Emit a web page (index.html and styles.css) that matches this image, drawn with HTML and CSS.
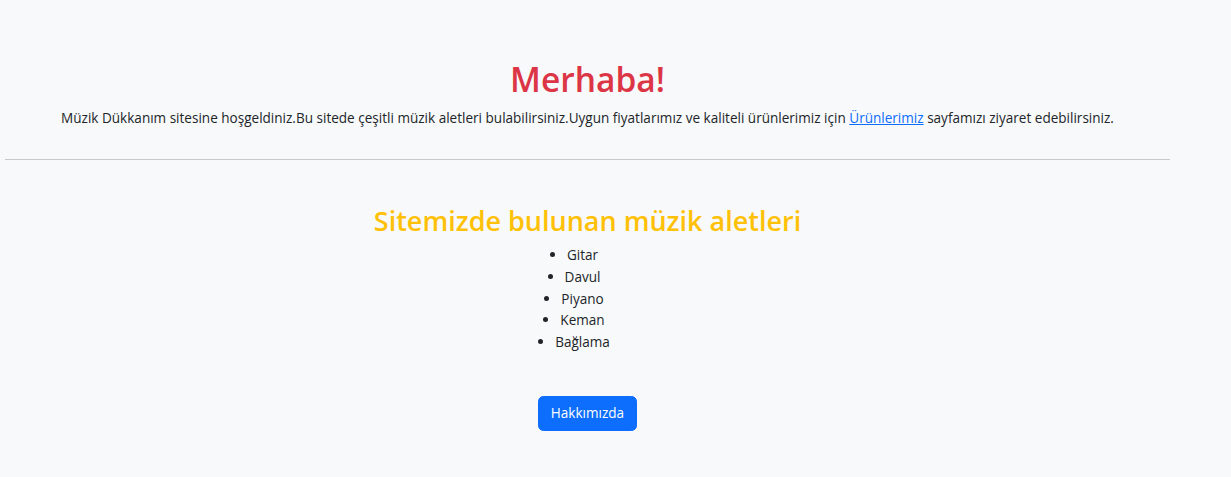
FILE: index.html
```html
<!DOCTYPE html>
<html lang="tr">
<head>
<meta charset="utf-8">
<title>Müzik Dükkanım</title>
<link rel="stylesheet" href="styles.css">
</head>
<body>
<div class="page">
  <h1 class="title">Merhaba!</h1>
  <p class="intro">Müzik Dükkanım sitesine hoşgeldiniz.Bu sitede çeşitli müzik aletleri bulabilirsiniz.Uygun fiyatlarımız ve kaliteli ürünlerimiz için <a href="#" class="link">Ürünlerimiz</a> sayfamızı ziyaret edebilirsiniz.</p>
  <hr class="divider">
  <section class="instruments">
    <h2 class="subtitle">Sitemizde bulunan müzik aletleri</h2>
    <ul class="list">
      <li class="item">Gitar</li>
      <li class="item">Davul</li>
      <li class="item">Piyano</li>
      <li class="item">Keman</li>
      <li class="item">Bağlama</li>
    </ul>
    <div class="actions">
      <button class="btn">Hakkımızda</button>
    </div>
  </section>
</div>
</body>
</html>
```
FILE: styles.css
```css
html, body {
  margin: 0;
  padding: 0;
  background: #f8f9fa;
}
body {
  font-family: "Open Sans", "Noto Sans", sans-serif;
  font-size: 13.56px;
  line-height: 21.6px;
  color: #212529;
}
.page {
  width: 1165px;
  margin-left: 5px;
  padding-top: 58px;
  text-align: center;
}
.title {
  margin: 0 0 7.2px;
  font-size: 33.5px;
  font-weight: 600;
  line-height: 43.2px;
  color: #dc3545;
}
.intro {
  margin: 0;
}
.link {
  color: #0d6efd;
  text-decoration: underline;
}
.divider {
  margin: 28.8px 0;
  border: 0;
  border-top: 1px solid #c8c9cb;
}
.instruments {
  padding-top: 15px;
}
.subtitle {
  margin: 0 0 7.2px;
  font-size: 27px;
  font-weight: 600;
  line-height: 34.56px;
  color: #ffc107;
}
.list {
  list-style: none;
  margin: 0 0 14.4px;
  padding: 0 27px 0 0;
}
.item::before {
  content: "";
  display: inline-block;
  width: 5px;
  height: 5px;
  border-radius: 50%;
  background: #212529;
  margin-right: 12px;
  vertical-align: 3px;
}
.actions {
  padding-top: 28.8px;
}
.btn {
  font-family: inherit;
  font-size: 13.56px;
  line-height: 21.6px;
  color: #fff;
  background: #0d6efd;
  border: 1px solid #0d6efd;
  border-radius: 5.4px;
  padding: 5.4px 11.5px;
}
```
